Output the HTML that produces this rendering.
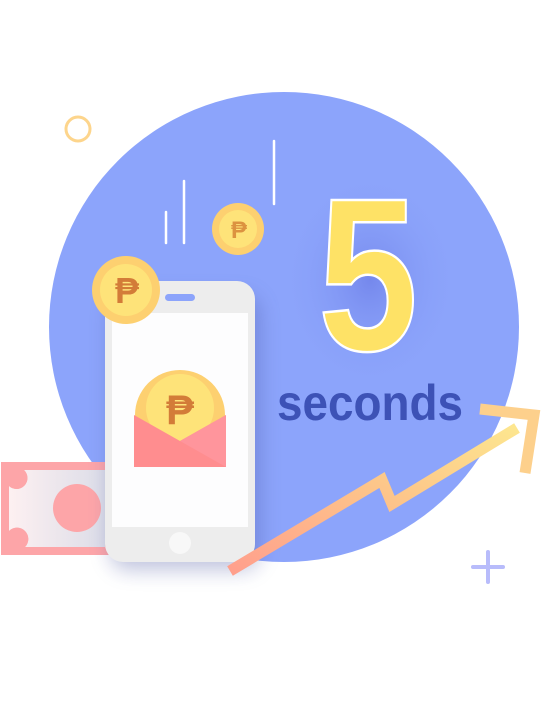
<!DOCTYPE html>
<html><head><meta charset="utf-8"><style>
html,body{margin:0;padding:0;background:#fff;width:553px;height:724px;overflow:hidden}
svg{display:block}
</style></head><body>
<svg width="553" height="724" viewBox="0 0 553 724" xmlns="http://www.w3.org/2000/svg">
<defs>
<linearGradient id="arr" x1="0" y1="1" x2="1" y2="0">
<stop offset="0" stop-color="#ff9f8c"/><stop offset="0.6" stop-color="#fdc98a"/><stop offset="1" stop-color="#fde68f"/></linearGradient>
<linearGradient id="bill" x1="0" y1="0" x2="1" y2="0">
<stop offset="0" stop-color="#fdf0f1"/><stop offset="1" stop-color="#dcdde8"/></linearGradient>
<radialGradient id="glow" cx="0.5" cy="0.5" r="0.5"><stop offset="0" stop-color="#6b7ce6" stop-opacity="0.7"/><stop offset="1" stop-color="#8ca3fb" stop-opacity="0"/></radialGradient>
<filter id="sh" x="-30%" y="-30%" width="160%" height="160%"><feGaussianBlur stdDeviation="10"/></filter>
</defs>
<circle cx="78" cy="129" r="12" fill="none" stroke="#fdd58c" stroke-width="3"/>
<circle cx="284" cy="327" r="235" fill="#8ca4fb"/>
<ellipse cx="370" cy="280" rx="90" ry="110" fill="url(#glow)"/>
<g stroke="#fff" stroke-width="2.5" stroke-linecap="round">
<line x1="166" y1="212" x2="166" y2="243"/><line x1="184" y1="181" x2="184" y2="243"/><line x1="274" y1="141" x2="274" y2="204"/></g>
<!-- bill -->
<rect x="1" y="462" width="108" height="93" fill="#fda5a8"/>
<path d="M9 470 H105 V547 H25 A10 10 0 0 0 9 531 V486 A10 10 0 0 0 24 470 Z" fill="url(#bill)"/>
<path d="M9 470 H24 A10 10 0 0 1 9 486 Z M9 531 A10 10 0 0 1 25 547 H9 Z" fill="#fda5a8"/>
<circle cx="77" cy="508" r="24" fill="#fda5a8"/>
<!-- phone -->
<rect x="110" y="295" width="150" height="275" rx="18" fill="#4a55a0" opacity="0.35" filter="url(#sh)"/>
<rect x="105" y="281" width="150" height="281" rx="18" fill="#ededed"/>
<rect x="112" y="313" width="136" height="214" fill="#fdfdfe"/>
<rect x="165" y="294" width="30" height="7" rx="3.5" fill="#8ca4fb"/>
<circle cx="180" cy="543" r="11" fill="#f8f8f8"/>
<!-- envelope -->
<path d="M135 415 A45 45 0 0 1 225 415 V440 H135 Z" fill="#fdd070"/>
<circle cx="180" cy="408" r="34" fill="#fee379"/>
<text x="180" y="424" text-anchor="middle" font-family="Liberation Sans,sans-serif" font-weight="bold" font-size="42" fill="#d37c38">₱</text>
<path d="M134 415 L180 441 L226 415 V467 H134 Z" fill="#ff8d8f"/>
<path d="M180 441 L226 415 V467 Z" fill="#ff959c"/>
<!-- coins -->
<circle cx="126" cy="290" r="34" fill="#fdd070"/><circle cx="126" cy="290" r="26" fill="#fee379"/>
<text x="127" y="303" text-anchor="middle" font-family="Liberation Sans,sans-serif" font-weight="bold" font-size="36" fill="#d37c38">₱</text>
<circle cx="238" cy="229" r="26" fill="#fdd070"/><circle cx="238" cy="229" r="19" fill="#fee379"/>
<text x="239" y="238" text-anchor="middle" font-family="Liberation Sans,sans-serif" font-weight="bold" font-size="24" fill="#dc9340">₱</text>
<!-- 5 -->
<text x="318" y="350" font-family="Liberation Sans,sans-serif" font-weight="bold" font-size="218" fill="#fee266" stroke="#fff" stroke-width="2.5" textLength="100" lengthAdjust="spacingAndGlyphs">5</text>
<text x="277" y="420" font-family="Liberation Sans,sans-serif" font-weight="bold" font-size="50" fill="#3d52b6" textLength="186" lengthAdjust="spacingAndGlyphs">seconds</text>
<!-- arrow -->
<path d="M230 571 L382 480 L392 504 L517 428" fill="none" stroke="url(#arr)" stroke-width="11" stroke-linejoin="miter"/>
<path d="M480 409 L534 415 L525 473" fill="none" stroke="#fdd08c" stroke-width="11"/>
<g stroke="#b8bcfb" stroke-width="4" stroke-linecap="round"><line x1="488" y1="552" x2="488" y2="582"/><line x1="473" y1="567" x2="503" y2="567"/></g>
</svg>
</body></html>
